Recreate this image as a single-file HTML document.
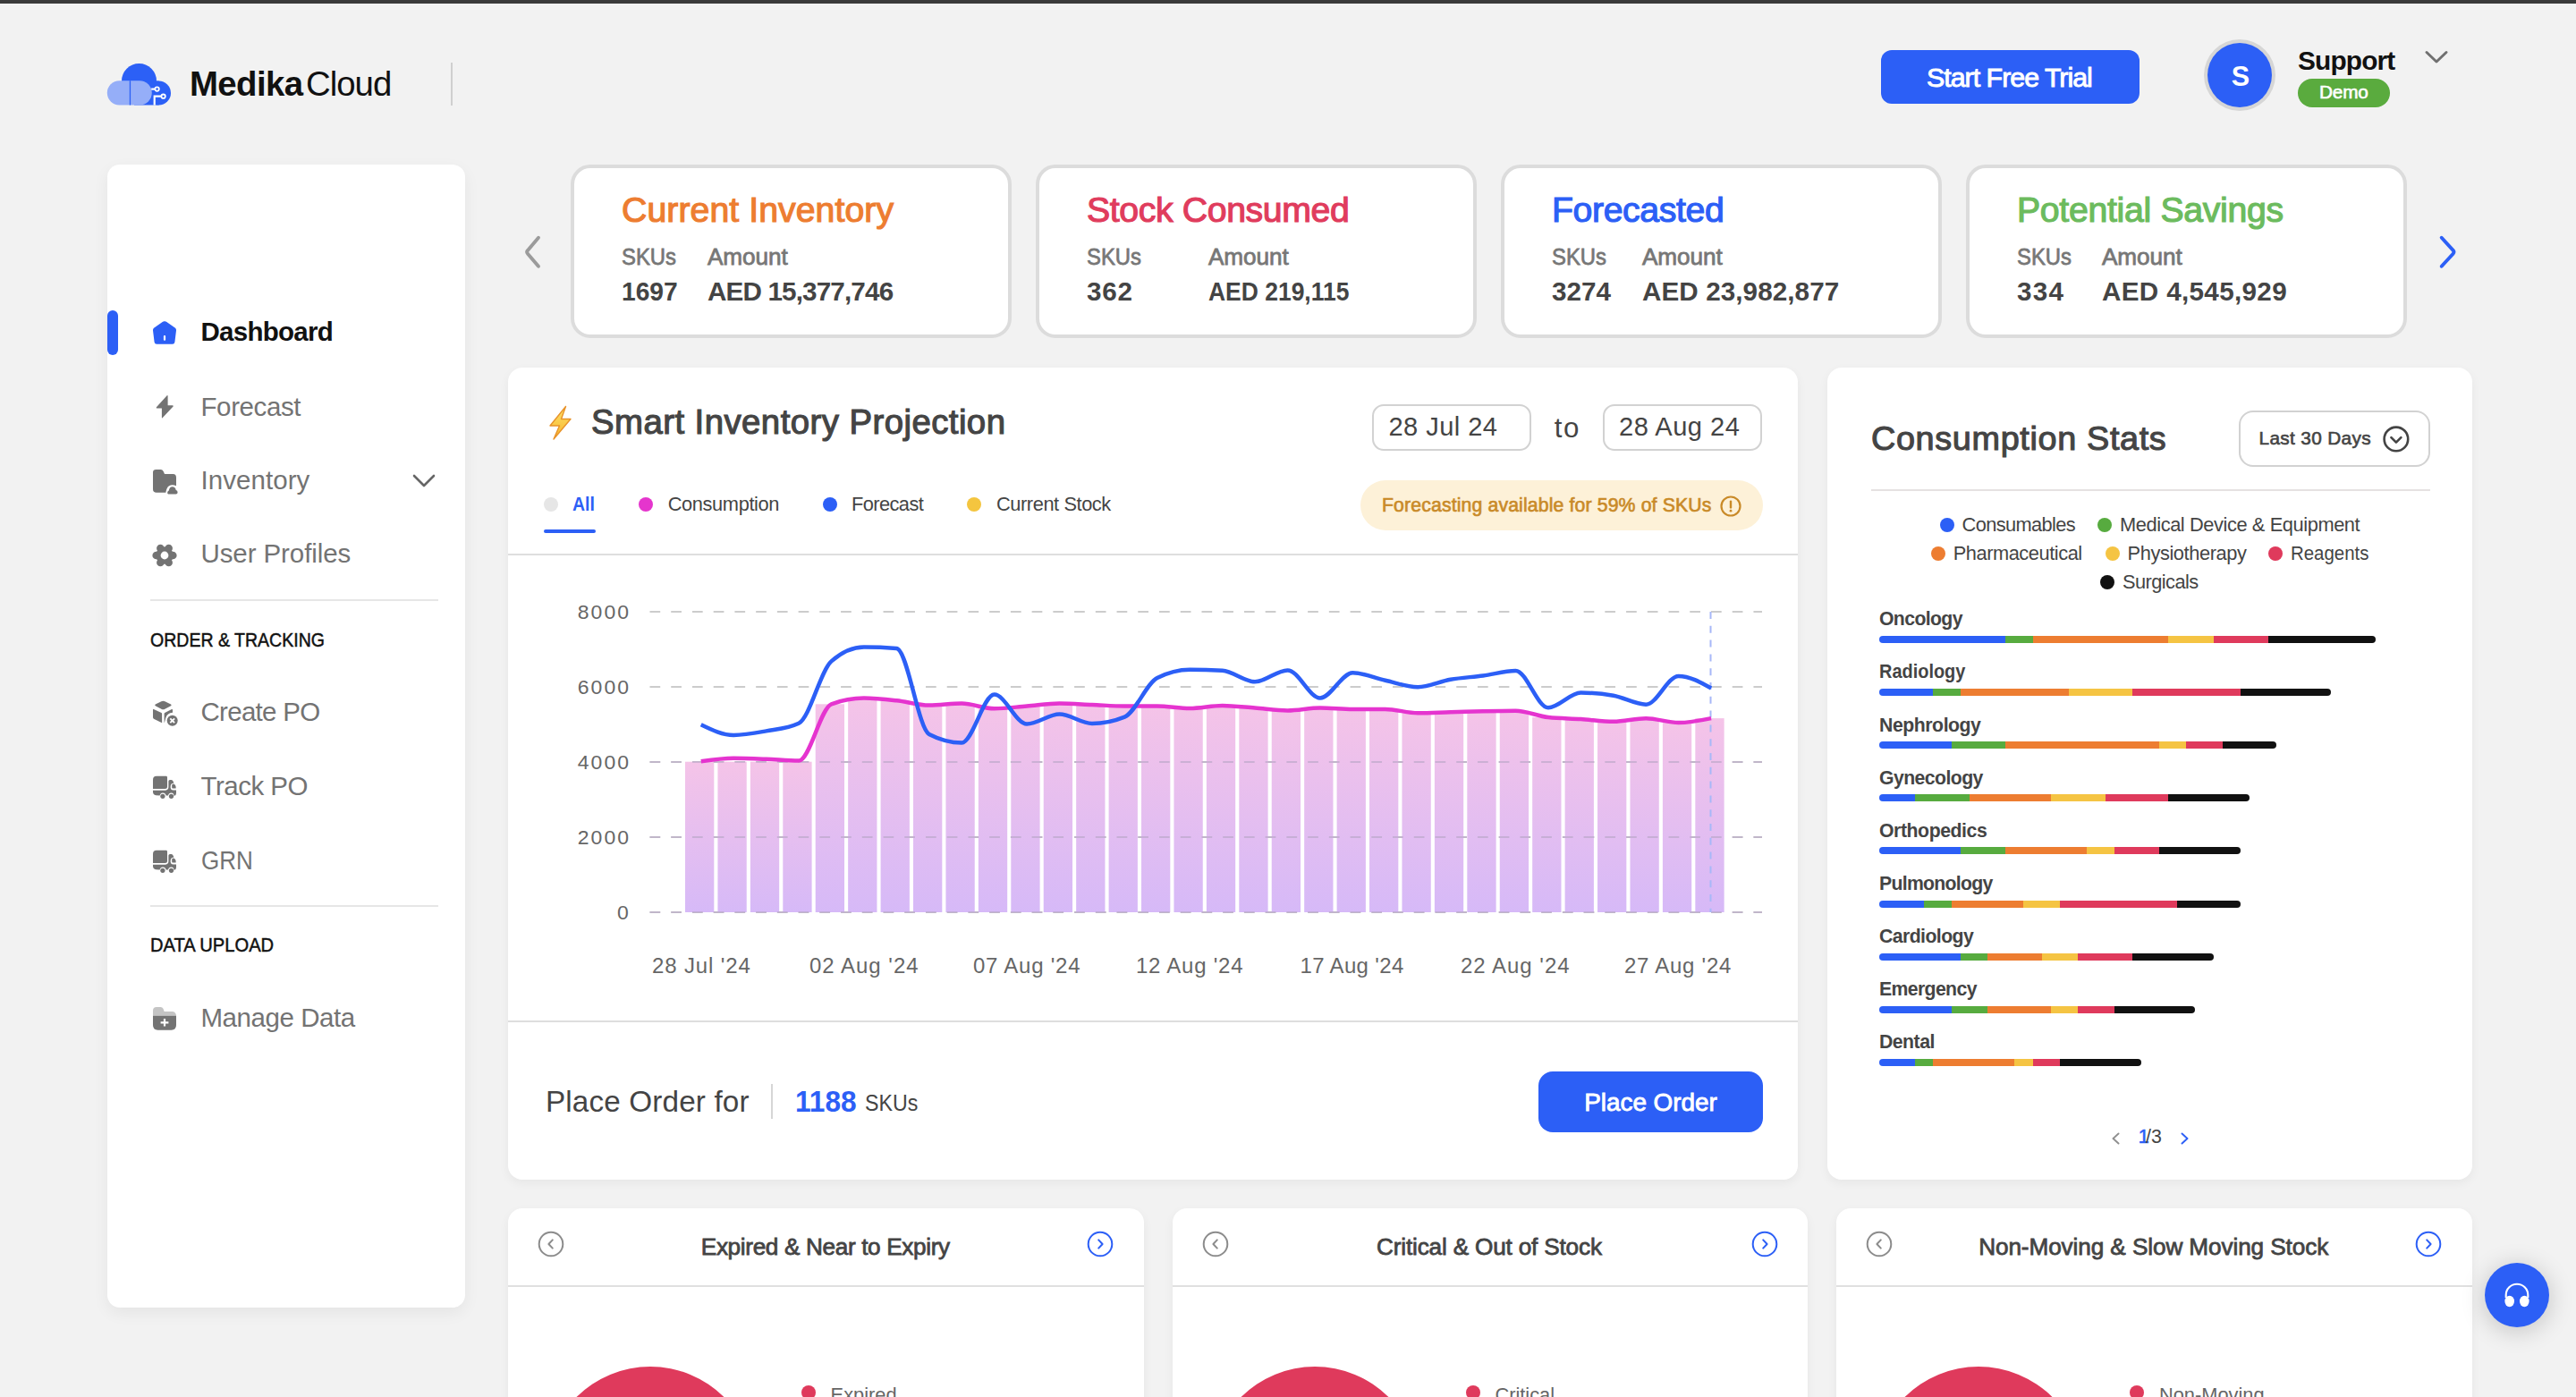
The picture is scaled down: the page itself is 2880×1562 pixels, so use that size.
<!DOCTYPE html>
<html><head><meta charset="utf-8"><title>MedikaCloud Dashboard</title>
<style>
html,body{margin:0;padding:0;}
body{width:2880px;height:1562px;overflow:hidden;position:relative;background:#f2f2f2;font-family:"Liberation Sans",sans-serif;}
.t{position:absolute;white-space:nowrap;line-height:1;}
.b{position:absolute;}
svg.b{overflow:visible;}
</style></head><body>
<div class="b" style="left:0.0px;top:0.0px;width:2880.0px;height:4.0px;background:#3b3b3b;"></div>
<svg class="b" style="left:110.0px;top:60.0px" width="90" height="65" viewBox="0 0 90 65">
<circle cx="45.5" cy="30.5" r="19.5" fill="#2c60f6"/>
<circle cx="67.5" cy="44" r="13.5" fill="#2c60f6"/>
<rect x="40" y="30.5" width="27.5" height="27" fill="#2c60f6"/>
<rect x="9.8" y="30.2" width="50" height="27.3" rx="13.65" fill="#95aef8"/>
<rect x="34.8" y="30.2" width="1.3" height="27.3" fill="#2c60f6"/>
<path d="M59.2 39.6 H63.2" stroke="#fff" stroke-width="2.2"/>
<circle cx="65.6" cy="39.6" r="2.2" fill="#2c60f6" stroke="#fff" stroke-width="1.8"/>
<path d="M62.7 57.5 V47.7 H70.1" stroke="#fff" stroke-width="2.2" fill="none"/>
<circle cx="72.6" cy="47.7" r="2.2" fill="#2c60f6" stroke="#fff" stroke-width="1.8"/>
</svg>
<div class="t" style="left:212.0px;top:74.9px;font-size:38.37px;color:#111;font-weight:700;letter-spacing:-0.60px;">Medika</div>
<div class="t" style="left:342.0px;top:74.9px;font-size:38.37px;color:#111;letter-spacing:-1.00px;">Cloud</div>
<div class="b" style="left:504.0px;top:70.0px;width:2.0px;height:48.0px;background:#cfcfcf;"></div>
<div class="b" style="left:2103.0px;top:56.0px;width:289.0px;height:60.0px;background:#2c5ff6;border-radius:12px;"></div>
<div class="t" style="left:2154.0px;top:70.9px;font-size:30.38px;color:#fff;-webkit-text-stroke:0.91px #fff;letter-spacing:-1.00px;">Start Free Trial</div>
<div class="b" style="left:2468.0px;top:48.4px;width:72.0px;height:72.0px;background:#2c5ff6;border-radius:50%;box-shadow:0 0 0 4px #d6d6d6;"></div>
<div class="t" style="left:2494.7px;top:69.8px;font-size:30.52px;color:#fff;font-weight:700;">S</div>
<div class="t" style="left:2569.0px;top:53.3px;font-size:29.80px;color:#111;font-weight:700;letter-spacing:-0.83px;">Support</div>
<div class="b" style="left:2569.0px;top:88.0px;width:103.0px;height:32.0px;background:#5aab3e;border-radius:16px;"></div>
<div class="t" style="left:2593.0px;top:93.3px;font-size:20.78px;color:#fff;-webkit-text-stroke:0.62px #fff;letter-spacing:-0.20px;">Demo</div>
<svg class="b" style="left:2710.0px;top:54.0px" width="28" height="20" viewBox="0 0 28 20"><path d="M3 4.5 L14 15 L25 4.5" stroke="#707070" stroke-width="3" fill="none" stroke-linecap="round" stroke-linejoin="round"/></svg>
<div class="b" style="left:120.0px;top:184.0px;width:400.0px;height:1278.0px;background:#fff;border-radius:14px;box-shadow:0 6px 18px rgba(0,0,0,0.06);"></div>
<div class="b" style="left:120.0px;top:347.0px;width:12.0px;height:50.0px;background:#2c5ff6;border-radius:6px;"></div>
<svg class="b" style="left:168.0px;top:356.0px" width="32" height="32" viewBox="0 0 32 32"><path d="M16 3.2 Q17 3 18 3.7 L28 10.8 Q29.2 11.8 29 13.4 L27.4 26.5 Q27 28.8 24.8 28.8 L7.2 28.8 Q5 28.8 4.6 26.5 L3 13.4 Q2.8 11.8 4 10.8 L14 3.7 Q15 3 16 3.2 Z" fill="#2c5ff6"/><rect x="14.9" y="19" width="2.2" height="5.8" rx="1" fill="#fff"/></svg>
<div class="t" style="left:224.5px;top:356.2px;font-size:29.51px;color:#111;font-weight:700;letter-spacing:-0.74px;">Dashboard</div>
<svg class="b" style="left:168.0px;top:438.0px" width="32" height="32" viewBox="0 0 32 32"><path d="M18.7 4.2 Q19.6 3.6 19.6 5 L19.6 15.3 L25 15.3 Q26.2 15.4 25.6 16.6 L13.6 29.2 Q12.9 29.9 12.9 28.6 L12.9 18.5 L7.5 18.5 Q6.1 18.4 6.9 17.2 Z" fill="#737373"/></svg>
<div class="t" style="left:224.5px;top:439.5px;font-size:29.51px;color:#737373;letter-spacing:-0.40px;">Forecast</div>
<svg class="b" style="left:168.0px;top:520.0px" width="32" height="36" viewBox="0 0 32 36"><path d="M3 8 Q3 4.9 6.5 4.9 L11.8 4.9 Q13.6 4.9 14.8 7.2 L16 9.9 L25.5 9.9 Q29 9.9 29 14 L29 23.3 Q27 22.3 24.8 22.3 Q20.4 22.3 18.5 26.5 Q17.7 28.5 17.4 30.8 L7 30.8 Q3 30.8 3 27 Z" fill="#737373"/>
<path d="M20.2 32.6 Q19 32.6 19.2 30.6 Q19.4 29 20.8 28.6 Q21.4 24.3 24.8 24.3 Q28 24.3 28.7 28 Q30.6 28.4 30.6 30.5 Q30.6 32.6 28.6 32.6 Z" fill="#737373"/></svg>
<div class="t" style="left:224.5px;top:521.9px;font-size:29.51px;color:#737373;letter-spacing:0.06px;">Inventory</div>
<svg class="b" style="left:460.0px;top:528.0px" width="28" height="20" viewBox="0 0 28 20"><path d="M3 4 L14 15 L25 4" stroke="#666" stroke-width="2.6" fill="none" stroke-linecap="round" stroke-linejoin="round"/></svg>
<svg class="b" style="left:168.0px;top:605.0px" width="32" height="32" viewBox="0 0 32 32"><circle cx="25.30" cy="16.00" r="4.3" fill="#737373"/><circle cx="20.65" cy="24.05" r="4.3" fill="#737373"/><circle cx="11.35" cy="24.05" r="4.3" fill="#737373"/><circle cx="6.70" cy="16.00" r="4.3" fill="#737373"/><circle cx="11.35" cy="7.95" r="4.3" fill="#737373"/><circle cx="20.65" cy="7.95" r="4.3" fill="#737373"/><circle cx="16" cy="16" r="9.8" fill="#737373"/><circle cx="16" cy="16" r="4.4" fill="#fff"/></svg>
<div class="t" style="left:224.5px;top:603.9px;font-size:29.51px;color:#737373;letter-spacing:-0.09px;">User Profiles</div>
<div class="b" style="left:168.0px;top:670.0px;width:322.0px;height:2.0px;background:#e6e6e6;"></div>
<div class="t" style="left:168.0px;top:704.5px;font-size:21.80px;color:#111;transform:scaleX(0.8959);transform-origin:0 0;-webkit-text-stroke:0.48px #111;">ORDER &amp; TRACKING</div>
<svg class="b" style="left:168.0px;top:780.0px" width="32" height="34" viewBox="0 0 32 34"><path d="M12.4 14.2 Q14.4 13.2 16.4 14.2 L23 17.6 Q24.4 18.4 23 19.2 L16.4 22.7 Q14.4 23.7 12.4 22.7 L5.8 19.2 Q4.4 18.4 5.8 17.6 Z" fill="#737373" transform="translate(0,-10)"/>
<path d="M3 13.4 L3 22 Q3 23.3 4.4 24 L13.1 28.2 L13.1 18 Q13.1 17.4 12.5 17.1 L3.8 12.9 Q3 12.6 3 13.4 Z" fill="#737373"/>
<path d="M15.6 28.5 L15.6 18 Q15.6 17.4 16.2 17.1 L24 13.1 Q25 12.8 25 13.8 L25 16.8 Q19 17 17.2 23 Q16.6 26 15.6 28.5 Z" fill="#737373"/>
<circle cx="24.7" cy="25.8" r="6" fill="#737373"/>
<path d="M22.3 23.4 L27.1 28.2 M27.1 23.4 L22.3 28.2" stroke="#fff" stroke-width="1.9"/></svg>
<div class="t" style="left:224.5px;top:780.9px;font-size:29.51px;color:#737373;letter-spacing:-0.71px;">Create PO</div>
<svg class="b" style="left:168.0px;top:863.0px" width="32" height="32" viewBox="0 0 32 32"><path d="M3 9 Q3 4.8 7 4.8 L17.6 4.8 Q19 4.8 19 6.2 L19 16.6 Q19 19.1 16.5 19.1 L3 19.1 Z" fill="#737373"/>
<path d="M20.4 10.6 Q20.4 9 22 9 L23.5 9 Q25 9 25.8 10.9 L26.4 12.4 Q24 12.4 23.2 14 Q22.6 15.3 22.6 17.3 Q22.8 20.4 25.6 20.6 L29 20.6 L29 24 Q29 26.6 26.6 27 Q26.6 23.8 23.5 23.4 Q20.6 23.4 20 26.6 L17.6 26.6 Q17 23.4 14 23.4 Q11 23.8 10.6 26.6 L6.4 26.3 Q3 25.6 3 22.6 L3 20.7 L17 20.7 Q20.4 20.4 20.4 17 Z" fill="#737373"/>
<path d="M24.2 17.6 L24.2 15 Q24.2 13.3 25.8 13.4 Q27.4 13.6 28 15 L28.6 16.6 L28.6 18.6 L25 18.6 Q24.2 18.6 24.2 17.6 Z" fill="#737373"/>
<circle cx="13.9" cy="27.3" r="2.6" fill="#737373"/><circle cx="23.5" cy="27.3" r="2.6" fill="#737373"/></svg>
<div class="t" style="left:224.5px;top:863.9px;font-size:29.51px;color:#737373;letter-spacing:-0.50px;">Track PO</div>
<svg class="b" style="left:168.0px;top:946.0px" width="32" height="32" viewBox="0 0 32 32"><path d="M3 9 Q3 4.8 7 4.8 L17.6 4.8 Q19 4.8 19 6.2 L19 16.6 Q19 19.1 16.5 19.1 L3 19.1 Z" fill="#737373"/>
<path d="M20.4 10.6 Q20.4 9 22 9 L23.5 9 Q25 9 25.8 10.9 L26.4 12.4 Q24 12.4 23.2 14 Q22.6 15.3 22.6 17.3 Q22.8 20.4 25.6 20.6 L29 20.6 L29 24 Q29 26.6 26.6 27 Q26.6 23.8 23.5 23.4 Q20.6 23.4 20 26.6 L17.6 26.6 Q17 23.4 14 23.4 Q11 23.8 10.6 26.6 L6.4 26.3 Q3 25.6 3 22.6 L3 20.7 L17 20.7 Q20.4 20.4 20.4 17 Z" fill="#737373"/>
<path d="M24.2 17.6 L24.2 15 Q24.2 13.3 25.8 13.4 Q27.4 13.6 28 15 L28.6 16.6 L28.6 18.6 L25 18.6 Q24.2 18.6 24.2 17.6 Z" fill="#737373"/>
<circle cx="13.9" cy="27.3" r="2.6" fill="#737373"/><circle cx="23.5" cy="27.3" r="2.6" fill="#737373"/></svg>
<div class="t" style="left:224.5px;top:946.9px;font-size:29.51px;color:#737373;transform:scaleX(0.8818);transform-origin:0 0;">GRN</div>
<div class="b" style="left:168.0px;top:1012.0px;width:322.0px;height:2.0px;background:#e6e6e6;"></div>
<div class="t" style="left:168.0px;top:1045.5px;font-size:21.80px;color:#111;transform:scaleX(0.9248);transform-origin:0 0;-webkit-text-stroke:0.48px #111;">DATA UPLOAD</div>
<svg class="b" style="left:168.0px;top:1120.0px" width="32" height="36" viewBox="0 0 32 36"><path d="M3 10 Q3 6 7 6 L11.5 6 Q13.6 6 14.6 8 L15.6 10.9 L24.6 10.9 Q28 10.9 29 15 L3 15 Z" fill="#c4c4c4"/>
<path d="M3 15.4 L29 15.4 L29 26 Q29 31.7 23.6 31.7 L8.4 31.7 Q3 31.7 3 26 Z" fill="#737373"/>
<path d="M16 19 V27.6 M11.6 23.3 H20.4" stroke="#fff" stroke-width="2.2"/></svg>
<div class="t" style="left:224.5px;top:1122.5px;font-size:29.51px;color:#737373;letter-spacing:-0.45px;">Manage Data</div>
<svg class="b" style="left:580.0px;top:258.0px" width="30" height="46" viewBox="0 0 30 46"><path d="M22 7.8 L10 21.9 Q8.3 23.8 10 25.7 L22 39.8" stroke="#9b9b9b" stroke-width="3.9" fill="none" stroke-linecap="round" stroke-linejoin="round"/></svg>
<svg class="b" style="left:2720.0px;top:258.0px" width="30" height="46" viewBox="0 0 30 46"><path d="M9.7 7.8 L22.6 21.9 Q24.3 23.8 22.6 25.7 L9.7 39.8" stroke="#2c5ff6" stroke-width="3.9" fill="none" stroke-linecap="round" stroke-linejoin="round"/></svg>
<div class="b" style="left:638.0px;top:184.0px;width:493.0px;height:194.0px;background:#fff;border:4px solid #dcdcdc;border-radius:22px;box-sizing:border-box;"></div>
<div class="t" style="left:695.0px;top:214.6px;font-size:39.24px;color:#ed7d31;-webkit-text-stroke:1.18px #ed7d31;letter-spacing:0.06px;">Current Inventory</div>
<div class="t" style="left:695.0px;top:273.8px;font-size:26.16px;color:#777;transform:scaleX(0.9104);transform-origin:0 0;-webkit-text-stroke:0.78px #777;">SKUs</div>
<div class="t" style="left:791.0px;top:273.8px;font-size:26.16px;color:#777;-webkit-text-stroke:0.78px #777;letter-spacing:-0.10px;">Amount</div>
<div class="t" style="left:695.0px;top:310.8px;font-size:29.65px;color:#444;transform:scaleX(0.9515);transform-origin:0 0;font-weight:700;">1697</div>
<div class="t" style="left:791.0px;top:310.8px;font-size:29.65px;color:#444;font-weight:700;letter-spacing:-0.85px;">AED 15,377,746</div>
<div class="b" style="left:1158.0px;top:184.0px;width:493.0px;height:194.0px;background:#fff;border:4px solid #dcdcdc;border-radius:22px;box-sizing:border-box;"></div>
<div class="t" style="left:1215.0px;top:214.6px;font-size:39.24px;color:#e03c5d;-webkit-text-stroke:1.18px #e03c5d;letter-spacing:-0.38px;">Stock Consumed</div>
<div class="t" style="left:1215.0px;top:273.8px;font-size:26.16px;color:#777;transform:scaleX(0.9104);transform-origin:0 0;-webkit-text-stroke:0.78px #777;">SKUs</div>
<div class="t" style="left:1351.0px;top:273.8px;font-size:26.16px;color:#777;-webkit-text-stroke:0.78px #777;letter-spacing:-0.10px;">Amount</div>
<div class="t" style="left:1215.0px;top:310.8px;font-size:29.65px;color:#444;font-weight:700;letter-spacing:0.75px;">362</div>
<div class="t" style="left:1351.0px;top:310.8px;font-size:29.65px;color:#444;transform:scaleX(0.8927);transform-origin:0 0;font-weight:700;">AED 219,115</div>
<div class="b" style="left:1678.0px;top:184.0px;width:493.0px;height:194.0px;background:#fff;border:4px solid #dcdcdc;border-radius:22px;box-sizing:border-box;"></div>
<div class="t" style="left:1735.0px;top:214.6px;font-size:39.24px;color:#2c5ff6;-webkit-text-stroke:1.18px #2c5ff6;letter-spacing:-0.39px;">Forecasted</div>
<div class="t" style="left:1735.0px;top:273.8px;font-size:26.16px;color:#777;transform:scaleX(0.9104);transform-origin:0 0;-webkit-text-stroke:0.78px #777;">SKUs</div>
<div class="t" style="left:1836.0px;top:273.8px;font-size:26.16px;color:#777;-webkit-text-stroke:0.78px #777;letter-spacing:-0.10px;">Amount</div>
<div class="t" style="left:1735.0px;top:310.8px;font-size:29.65px;color:#444;font-weight:700;">3274</div>
<div class="t" style="left:1836.0px;top:310.8px;font-size:29.65px;color:#444;font-weight:700;letter-spacing:0.08px;">AED 23,982,877</div>
<div class="b" style="left:2198.0px;top:184.0px;width:493.0px;height:194.0px;background:#fff;border:4px solid #dcdcdc;border-radius:22px;box-sizing:border-box;"></div>
<div class="t" style="left:2255.0px;top:214.6px;font-size:39.24px;color:#6cbb5e;-webkit-text-stroke:1.18px #6cbb5e;letter-spacing:-0.32px;">Potential Savings</div>
<div class="t" style="left:2255.0px;top:273.8px;font-size:26.16px;color:#777;transform:scaleX(0.9104);transform-origin:0 0;-webkit-text-stroke:0.78px #777;">SKUs</div>
<div class="t" style="left:2350.0px;top:273.8px;font-size:26.16px;color:#777;-webkit-text-stroke:0.78px #777;letter-spacing:-0.10px;">Amount</div>
<div class="t" style="left:2255.0px;top:310.8px;font-size:29.65px;color:#444;font-weight:700;letter-spacing:1.25px;">334</div>
<div class="t" style="left:2350.0px;top:310.8px;font-size:29.65px;color:#444;font-weight:700;letter-spacing:0.33px;">AED 4,545,929</div>
<div class="b" style="left:568.0px;top:411.0px;width:1442.0px;height:908.0px;background:#fff;border-radius:16px;box-shadow:0 4px 12px rgba(0,0,0,0.05);"></div>
<svg class="b" style="left:608.0px;top:450.0px" width="36" height="46" viewBox="0 0 36 46"><defs><linearGradient id="lg" x1="0" y1="0" x2="0" y2="1"><stop offset="0" stop-color="#fde26a"/><stop offset="1" stop-color="#f7b52c"/></linearGradient></defs>
<path d="M24.5 4.5 L7 26 L17.5 26 L11 41 L30 18.5 L19.5 18.5 Z" fill="url(#lg)" stroke="#e8932a" stroke-width="1.4" stroke-linejoin="round"/></svg>
<div class="t" style="left:661.0px;top:453.4px;font-size:38.37px;color:#444;-webkit-text-stroke:1.15px #444;letter-spacing:0.44px;">Smart Inventory Projection</div>
<div class="b" style="left:1534.0px;top:452.0px;width:178.0px;height:52.0px;background:#fff;border:2px solid #d2d2d2;border-radius:13px;box-sizing:border-box;"></div>
<div class="t" style="left:1552.5px;top:463.3px;font-size:29.07px;color:#444;letter-spacing:0.44px;">28 Jul 24</div>
<div class="t" style="left:1737.8px;top:463.0px;font-size:31.25px;color:#444;letter-spacing:1.60px;">to</div>
<div class="b" style="left:1792.0px;top:452.0px;width:178.0px;height:52.0px;background:#fff;border:2px solid #d2d2d2;border-radius:13px;box-sizing:border-box;"></div>
<div class="t" style="left:1810.0px;top:463.3px;font-size:29.07px;color:#444;letter-spacing:0.50px;">28 Aug 24</div>
<div class="b" style="left:1521.0px;top:537.0px;width:450.0px;height:56.0px;background:#fdf1d8;border-radius:28px;"></div>
<div class="t" style="left:1545.0px;top:553.8px;font-size:21.22px;color:#c98a28;-webkit-text-stroke:0.64px #c98a28;letter-spacing:0.14px;">Forecasting available for 59% of SKUs</div>
<svg class="b" style="left:1922.0px;top:553.0px" width="26" height="26" viewBox="0 0 26 26"><circle cx="13" cy="13" r="10.5" stroke="#c98a28" stroke-width="2.2" fill="none"/><path d="M13 7.6 V14.4" stroke="#c98a28" stroke-width="2.4" stroke-linecap="round"/><circle cx="13" cy="18.2" r="1.4" fill="#c98a28"/></svg>
<div class="b" style="left:608.0px;top:556.0px;width:16.0px;height:16.0px;background:#e6e6e6;border-radius:50%;"></div>
<div class="t" style="left:640.4px;top:553.0px;font-size:21.80px;color:#2c5ff6;transform:scaleX(0.8929);transform-origin:0 0;font-weight:700;">All</div>
<div class="b" style="left:608.0px;top:592.0px;width:58.0px;height:4.0px;background:#2c5ff6;border-radius:2px;"></div>
<div class="b" style="left:714.0px;top:556.0px;width:16.0px;height:16.0px;background:#e535cd;border-radius:50%;"></div>
<div class="t" style="left:746.7px;top:553.0px;font-size:21.80px;color:#444;letter-spacing:-0.37px;">Consumption</div>
<div class="b" style="left:920.0px;top:556.0px;width:16.0px;height:16.0px;background:#2c5ff6;border-radius:50%;"></div>
<div class="t" style="left:952.0px;top:553.0px;font-size:21.80px;color:#444;letter-spacing:-0.57px;">Forecast</div>
<div class="b" style="left:1081.0px;top:556.0px;width:16.0px;height:16.0px;background:#f4c53f;border-radius:50%;"></div>
<div class="t" style="left:1114.0px;top:553.0px;font-size:21.80px;color:#444;letter-spacing:-0.42px;">Current Stock</div>
<div class="b" style="left:568.0px;top:619.0px;width:1442.0px;height:2.0px;background:#dedede;"></div>
<div class="b" style="left:568.0px;top:1141.0px;width:1442.0px;height:2.0px;background:#dedede;"></div>
<svg class="b" style="left:560.0px;top:640.0px" width="1440" height="400" viewBox="0 0 1440 400"><defs><linearGradient id="bg" x1="0" y1="0" x2="0" y2="1">
<stop offset="0" stop-color="#f4bfe6"/><stop offset="1" stop-color="#d3b4f7"/></linearGradient></defs><line x1="166.5" y1="44.0" x2="1410" y2="44.0" stroke="#cccccc" stroke-width="2" stroke-dasharray="11.7 12.03"/><line x1="166.5" y1="128.0" x2="1410" y2="128.0" stroke="#cccccc" stroke-width="2" stroke-dasharray="11.7 12.03"/><line x1="166.5" y1="212.0" x2="1410" y2="212.0" stroke="#cccccc" stroke-width="2" stroke-dasharray="11.7 12.03"/><line x1="166.5" y1="296.0" x2="1410" y2="296.0" stroke="#cccccc" stroke-width="2" stroke-dasharray="11.7 12.03"/><line x1="166.5" y1="380.0" x2="1410" y2="380.0" stroke="#cccccc" stroke-width="2" stroke-dasharray="11.7 12.03"/><rect x="206.00" y="211.70" width="32.30" height="168.30" fill="url(#bg)" fill-opacity="0.93"/><rect x="242.43" y="211.70" width="32.30" height="168.30" fill="url(#bg)" fill-opacity="0.93"/><rect x="278.86" y="211.70" width="32.30" height="168.30" fill="url(#bg)" fill-opacity="0.93"/><rect x="315.29" y="211.70" width="32.30" height="168.30" fill="url(#bg)" fill-opacity="0.93"/><rect x="351.72" y="147.30" width="32.30" height="232.70" fill="url(#bg)" fill-opacity="0.93"/><rect x="388.15" y="140.60" width="32.30" height="239.40" fill="url(#bg)" fill-opacity="0.93"/><rect x="424.58" y="143.30" width="32.30" height="236.70" fill="url(#bg)" fill-opacity="0.93"/><rect x="461.01" y="148.60" width="32.30" height="231.40" fill="url(#bg)" fill-opacity="0.93"/><rect x="497.44" y="146.60" width="32.30" height="233.40" fill="url(#bg)" fill-opacity="0.93"/><rect x="533.87" y="152.30" width="32.30" height="227.70" fill="url(#bg)" fill-opacity="0.93"/><rect x="570.30" y="149.50" width="32.30" height="230.50" fill="url(#bg)" fill-opacity="0.93"/><rect x="606.73" y="146.60" width="32.30" height="233.40" fill="url(#bg)" fill-opacity="0.93"/><rect x="643.16" y="148.00" width="32.30" height="232.00" fill="url(#bg)" fill-opacity="0.93"/><rect x="679.59" y="149.50" width="32.30" height="230.50" fill="url(#bg)" fill-opacity="0.93"/><rect x="716.02" y="149.50" width="32.30" height="230.50" fill="url(#bg)" fill-opacity="0.93"/><rect x="752.45" y="152.00" width="32.30" height="228.00" fill="url(#bg)" fill-opacity="0.93"/><rect x="788.88" y="149.00" width="32.30" height="231.00" fill="url(#bg)" fill-opacity="0.93"/><rect x="825.31" y="151.60" width="32.30" height="228.40" fill="url(#bg)" fill-opacity="0.93"/><rect x="861.74" y="154.50" width="32.30" height="225.50" fill="url(#bg)" fill-opacity="0.93"/><rect x="898.17" y="151.60" width="32.30" height="228.40" fill="url(#bg)" fill-opacity="0.93"/><rect x="934.60" y="153.00" width="32.30" height="227.00" fill="url(#bg)" fill-opacity="0.93"/><rect x="971.03" y="153.00" width="32.30" height="227.00" fill="url(#bg)" fill-opacity="0.93"/><rect x="1007.46" y="157.30" width="32.30" height="222.70" fill="url(#bg)" fill-opacity="0.93"/><rect x="1043.89" y="156.20" width="32.30" height="223.80" fill="url(#bg)" fill-opacity="0.93"/><rect x="1080.32" y="155.20" width="32.30" height="224.80" fill="url(#bg)" fill-opacity="0.93"/><rect x="1116.75" y="154.70" width="32.30" height="225.30" fill="url(#bg)" fill-opacity="0.93"/><rect x="1153.18" y="162.10" width="32.30" height="217.90" fill="url(#bg)" fill-opacity="0.93"/><rect x="1189.61" y="164.10" width="32.30" height="215.90" fill="url(#bg)" fill-opacity="0.93"/><rect x="1226.04" y="166.80" width="32.30" height="213.20" fill="url(#bg)" fill-opacity="0.93"/><rect x="1262.47" y="163.20" width="32.30" height="216.80" fill="url(#bg)" fill-opacity="0.93"/><rect x="1298.90" y="168.10" width="32.30" height="211.90" fill="url(#bg)" fill-opacity="0.93"/><rect x="1335.33" y="163.10" width="32.30" height="216.90" fill="url(#bg)" fill-opacity="0.93"/><line x1="166.5" y1="212.0" x2="1410" y2="212.0" stroke="#b8a6c6" stroke-opacity="0.6" stroke-width="2" stroke-dasharray="11.7 12.03"/><line x1="166.5" y1="296.0" x2="1410" y2="296.0" stroke="#b8a6c6" stroke-opacity="0.6" stroke-width="2" stroke-dasharray="11.7 12.03"/><line x1="166.5" y1="380.0" x2="1410" y2="380.0" stroke="#b8a6c6" stroke-opacity="0.6" stroke-width="2" stroke-dasharray="11.7 12.03"/><line x1="1352.5" y1="44.0" x2="1352.5" y2="380.0" stroke="#a7b8f8" stroke-width="2" stroke-dasharray="8 7.8"/><path d="M783.75 851.30 C795.89 849.55 808.04 847.80 820.18 847.80 C832.32 847.80 844.47 848.33 856.61 848.80 C868.75 849.27 880.90 850.60 893.04 850.60 C905.18 850.60 917.33 791.77 929.47 787.30 C941.61 782.83 953.76 780.60 965.90 780.60 C978.04 780.60 990.19 781.97 1002.33 783.30 C1014.47 784.63 1026.62 788.60 1038.76 788.60 C1050.90 788.60 1063.05 786.60 1075.19 786.60 C1087.33 786.60 1099.48 792.30 1111.62 792.30 C1123.76 792.30 1135.91 790.45 1148.05 789.50 C1160.19 788.55 1172.34 786.60 1184.48 786.60 C1196.62 786.60 1208.77 787.52 1220.91 788.00 C1233.05 788.48 1245.20 789.50 1257.34 789.50 C1269.48 789.50 1281.63 789.50 1293.77 789.50 C1305.91 789.50 1318.06 792.00 1330.20 792.00 C1342.34 792.00 1354.49 789.00 1366.63 789.00 C1378.77 789.00 1390.92 790.68 1403.06 791.60 C1415.20 792.52 1427.35 794.50 1439.49 794.50 C1451.63 794.50 1463.78 791.60 1475.92 791.60 C1488.06 791.60 1500.21 793.00 1512.35 793.00 C1524.49 793.00 1536.64 793.00 1548.78 793.00 C1560.92 793.00 1573.07 797.30 1585.21 797.30 C1597.35 797.30 1609.50 796.55 1621.64 796.20 C1633.78 795.85 1645.93 795.45 1658.07 795.20 C1670.21 794.95 1682.36 794.70 1694.50 794.70 C1706.64 794.70 1718.79 800.77 1730.93 802.10 C1743.07 803.43 1755.22 803.32 1767.36 804.10 C1779.50 804.88 1791.65 806.80 1803.79 806.80 C1815.93 806.80 1828.08 803.20 1840.22 803.20 C1852.36 803.20 1864.51 808.10 1876.65 808.10 C1888.79 808.10 1900.94 805.60 1913.08 803.10" transform="translate(-560,-640)" fill="none" stroke="#e534cf" stroke-width="4.5"/><path d="M783.75 810.20 C795.89 816.10 808.04 822.00 820.18 822.00 C832.32 822.00 844.47 819.60 856.61 817.40 C868.75 815.20 880.90 814.53 893.04 808.80 C905.18 803.07 917.33 749.93 929.47 739.40 C941.61 728.87 953.76 723.60 965.90 723.60 C978.04 723.60 990.19 724.07 1002.33 725.00 C1014.47 725.93 1026.62 814.67 1038.76 821.00 C1050.90 827.33 1063.05 830.50 1075.19 830.50 C1087.33 830.50 1099.48 776.60 1111.62 776.60 C1123.76 776.60 1135.91 809.50 1148.05 809.50 C1160.19 809.50 1172.34 798.50 1184.48 798.50 C1196.62 798.50 1208.77 809.00 1220.91 809.00 C1233.05 809.00 1245.20 806.53 1257.34 801.60 C1269.48 796.67 1281.63 764.20 1293.77 758.00 C1305.91 751.80 1318.06 748.70 1330.20 748.70 C1342.34 748.70 1354.49 749.07 1366.63 749.80 C1378.77 750.53 1390.92 762.30 1403.06 762.30 C1415.20 762.30 1427.35 749.40 1439.49 749.40 C1451.63 749.40 1463.78 780.40 1475.92 780.40 C1488.06 780.40 1500.21 752.20 1512.35 752.20 C1524.49 752.20 1536.64 758.13 1548.78 760.80 C1560.92 763.47 1573.07 768.20 1585.21 768.20 C1597.35 768.20 1609.50 761.92 1621.64 759.80 C1633.78 757.68 1645.93 757.13 1658.07 755.50 C1670.21 753.87 1682.36 750.00 1694.50 750.00 C1706.64 750.00 1718.79 791.30 1730.93 791.30 C1743.07 791.30 1755.22 774.60 1767.36 774.60 C1779.50 774.60 1791.65 775.63 1803.79 777.70 C1815.93 779.77 1828.08 787.70 1840.22 787.70 C1852.36 787.70 1864.51 755.90 1876.65 755.90 C1888.79 755.90 1900.94 762.70 1913.08 769.50" transform="translate(-560,-640)" fill="none" stroke="#2c5ff6" stroke-width="4.5"/></svg>
<div class="t" style="left:645.7px;top:673.2px;font-size:22.97px;color:#666;letter-spacing:2.10px;">8000</div>
<div class="t" style="left:645.7px;top:757.2px;font-size:22.97px;color:#666;letter-spacing:2.10px;">6000</div>
<div class="t" style="left:645.7px;top:841.2px;font-size:22.97px;color:#666;letter-spacing:2.10px;">4000</div>
<div class="t" style="left:645.7px;top:925.2px;font-size:22.97px;color:#666;letter-spacing:2.10px;">2000</div>
<div class="t" style="left:690.0px;top:1009.2px;font-size:22.97px;color:#666;">0</div>
<div class="t" style="left:729.0px;top:1068.3px;font-size:23.98px;color:#666;letter-spacing:0.89px;">28 Jul '24</div>
<div class="t" style="left:905.0px;top:1068.3px;font-size:23.98px;color:#666;letter-spacing:1.00px;">02 Aug '24</div>
<div class="t" style="left:1088.0px;top:1068.3px;font-size:23.98px;color:#666;letter-spacing:0.78px;">07 Aug '24</div>
<div class="t" style="left:1270.0px;top:1068.3px;font-size:23.98px;color:#666;letter-spacing:0.78px;">12 Aug '24</div>
<div class="t" style="left:1453.5px;top:1068.3px;font-size:23.98px;color:#666;letter-spacing:0.36px;">17 Aug '24</div>
<div class="t" style="left:1633.0px;top:1068.3px;font-size:23.98px;color:#666;letter-spacing:1.00px;">22 Aug '24</div>
<div class="t" style="left:1816.0px;top:1068.3px;font-size:23.98px;color:#666;letter-spacing:0.76px;">27 Aug '24</div>
<div class="t" style="left:610.0px;top:1214.7px;font-size:33.28px;color:#444;letter-spacing:0.14px;">Place Order for</div>
<div class="b" style="left:862.0px;top:1212.0px;width:2.0px;height:39.0px;background:#d6d6d6;"></div>
<div class="t" style="left:888.6px;top:1214.7px;font-size:33.28px;color:#2c5ff6;transform:scaleX(0.9500);transform-origin:0 0;font-weight:700;">1188</div>
<div class="t" style="left:966.8px;top:1221.4px;font-size:25.44px;color:#444;transform:scaleX(0.9108);transform-origin:0 0;">SKUs</div>
<div class="b" style="left:1720.0px;top:1198.0px;width:251.0px;height:68.0px;background:#2c5ff6;border-radius:16px;"></div>
<div class="t" style="left:1771.3px;top:1218.6px;font-size:27.91px;color:#fff;-webkit-text-stroke:0.84px #fff;letter-spacing:-0.04px;">Place Order</div>
<div class="b" style="left:2043.0px;top:411.0px;width:721.0px;height:908.0px;background:#fff;border-radius:16px;box-shadow:0 4px 12px rgba(0,0,0,0.05);"></div>
<div class="t" style="left:2092.0px;top:471.9px;font-size:37.79px;color:#444;-webkit-text-stroke:1.13px #444;letter-spacing:0.66px;">Consumption Stats</div>
<div class="b" style="left:2503.4px;top:459.3px;width:213.5px;height:63.2px;border:2px solid #d2d2d2;border-radius:16px;box-sizing:border-box;background:#fff;"></div>
<div class="t" style="left:2525.6px;top:480.0px;font-size:20.78px;color:#444;-webkit-text-stroke:0.62px #444;letter-spacing:0.34px;">Last 30 Days</div>
<svg class="b" style="left:2662.0px;top:474.0px" width="34" height="34" viewBox="0 0 34 34"><circle cx="16.9" cy="16.9" r="13.3" stroke="#444" stroke-width="2.6" fill="none"/><path d="M11.4 15.2 L16.9 20.7 L22.4 15.2" stroke="#444" stroke-width="2.6" fill="none" stroke-linecap="round" stroke-linejoin="round"/></svg>
<div class="b" style="left:2092.0px;top:547.0px;width:625.0px;height:2.0px;background:#e5e1e1;"></div>
<div class="b" style="left:2169.0px;top:579.0px;width:16.0px;height:16.0px;background:#2c5ff6;border-radius:50%;"></div>
<div class="t" style="left:2193.6px;top:575.5px;font-size:21.80px;color:#444;letter-spacing:-0.61px;">Consumables</div>
<div class="b" style="left:2345.0px;top:579.0px;width:16.0px;height:16.0px;background:#57ab3f;border-radius:50%;"></div>
<div class="t" style="left:2370.0px;top:575.5px;font-size:21.80px;color:#444;letter-spacing:-0.40px;">Medical Device &amp; Equipment</div>
<div class="b" style="left:2159.0px;top:611.0px;width:16.0px;height:16.0px;background:#ed7d31;border-radius:50%;"></div>
<div class="t" style="left:2183.7px;top:607.7px;font-size:21.80px;color:#444;letter-spacing:-0.44px;">Pharmaceutical</div>
<div class="b" style="left:2354.0px;top:611.0px;width:16.0px;height:16.0px;background:#f5c443;border-radius:50%;"></div>
<div class="t" style="left:2378.5px;top:607.7px;font-size:21.80px;color:#444;letter-spacing:-0.39px;">Physiotherapy</div>
<div class="b" style="left:2536.0px;top:611.0px;width:16.0px;height:16.0px;background:#df3a5c;border-radius:50%;"></div>
<div class="t" style="left:2560.7px;top:607.7px;font-size:21.80px;color:#444;transform:scaleX(0.9366);transform-origin:0 0;">Reagents</div>
<div class="b" style="left:2348.0px;top:643.0px;width:16.0px;height:16.0px;background:#111111;border-radius:50%;"></div>
<div class="t" style="left:2373.0px;top:639.7px;font-size:21.80px;color:#444;letter-spacing:-0.56px;">Surgicals</div>
<div class="t" style="left:2101.0px;top:681.3px;font-size:21.22px;color:#444;font-weight:700;letter-spacing:-0.63px;">Oncology</div>
<div class="b" style="left:2101.0px;top:711.0px;width:555.0px;height:8px;border-radius:4px;overflow:hidden"><div style="position:absolute;left:0.0px;top:0;width:141.0px;height:8px;background:#2c5ff6"></div><div style="position:absolute;left:141.0px;top:0;width:30.5px;height:8px;background:#57ab3f"></div><div style="position:absolute;left:171.5px;top:0;width:151.8px;height:8px;background:#ed7d31"></div><div style="position:absolute;left:323.3px;top:0;width:50.7px;height:8px;background:#f5c443"></div><div style="position:absolute;left:374.0px;top:0;width:61.0px;height:8px;background:#df3a5c"></div><div style="position:absolute;left:435.0px;top:0;width:120.0px;height:8px;background:#111111"></div></div>
<div class="t" style="left:2101.0px;top:740.4px;font-size:21.22px;color:#444;transform:scaleX(0.9398);transform-origin:0 0;font-weight:700;">Radiology</div>
<div class="b" style="left:2101.0px;top:770.1px;width:505.0px;height:8px;border-radius:4px;overflow:hidden"><div style="position:absolute;left:0.0px;top:0;width:60.0px;height:8px;background:#2c5ff6"></div><div style="position:absolute;left:60.0px;top:0;width:30.7px;height:8px;background:#57ab3f"></div><div style="position:absolute;left:90.7px;top:0;width:121.3px;height:8px;background:#ed7d31"></div><div style="position:absolute;left:212.0px;top:0;width:71.0px;height:8px;background:#f5c443"></div><div style="position:absolute;left:283.0px;top:0;width:120.8px;height:8px;background:#df3a5c"></div><div style="position:absolute;left:403.8px;top:0;width:101.2px;height:8px;background:#111111"></div></div>
<div class="t" style="left:2101.0px;top:799.5px;font-size:21.22px;color:#444;font-weight:700;letter-spacing:-0.44px;">Nephrology</div>
<div class="b" style="left:2101.0px;top:829.2px;width:444.0px;height:8px;border-radius:4px;overflow:hidden"><div style="position:absolute;left:0.0px;top:0;width:80.7px;height:8px;background:#2c5ff6"></div><div style="position:absolute;left:80.7px;top:0;width:60.3px;height:8px;background:#57ab3f"></div><div style="position:absolute;left:141.0px;top:0;width:172.0px;height:8px;background:#ed7d31"></div><div style="position:absolute;left:313.0px;top:0;width:30.4px;height:8px;background:#f5c443"></div><div style="position:absolute;left:343.4px;top:0;width:40.6px;height:8px;background:#df3a5c"></div><div style="position:absolute;left:384.0px;top:0;width:60.0px;height:8px;background:#111111"></div></div>
<div class="t" style="left:2101.0px;top:858.6px;font-size:21.22px;color:#444;font-weight:700;letter-spacing:-0.56px;">Gynecology</div>
<div class="b" style="left:2101.0px;top:888.3px;width:414.0px;height:8px;border-radius:4px;overflow:hidden"><div style="position:absolute;left:0.0px;top:0;width:40.0px;height:8px;background:#2c5ff6"></div><div style="position:absolute;left:40.0px;top:0;width:61.0px;height:8px;background:#57ab3f"></div><div style="position:absolute;left:101.0px;top:0;width:90.8px;height:8px;background:#ed7d31"></div><div style="position:absolute;left:191.8px;top:0;width:60.8px;height:8px;background:#f5c443"></div><div style="position:absolute;left:252.6px;top:0;width:70.7px;height:8px;background:#df3a5c"></div><div style="position:absolute;left:323.3px;top:0;width:90.7px;height:8px;background:#111111"></div></div>
<div class="t" style="left:2101.0px;top:917.7px;font-size:21.22px;color:#444;font-weight:700;letter-spacing:-0.42px;">Orthopedics</div>
<div class="b" style="left:2101.0px;top:947.4px;width:403.8px;height:8px;border-radius:4px;overflow:hidden"><div style="position:absolute;left:0.0px;top:0;width:90.7px;height:8px;background:#2c5ff6"></div><div style="position:absolute;left:90.7px;top:0;width:50.3px;height:8px;background:#57ab3f"></div><div style="position:absolute;left:141.0px;top:0;width:91.0px;height:8px;background:#ed7d31"></div><div style="position:absolute;left:232.0px;top:0;width:30.6px;height:8px;background:#f5c443"></div><div style="position:absolute;left:262.6px;top:0;width:50.4px;height:8px;background:#df3a5c"></div><div style="position:absolute;left:313.0px;top:0;width:90.8px;height:8px;background:#111111"></div></div>
<div class="t" style="left:2101.0px;top:976.8px;font-size:21.22px;color:#444;font-weight:700;letter-spacing:-0.70px;">Pulmonology</div>
<div class="b" style="left:2101.0px;top:1006.5px;width:403.8px;height:8px;border-radius:4px;overflow:hidden"><div style="position:absolute;left:0.0px;top:0;width:50.0px;height:8px;background:#2c5ff6"></div><div style="position:absolute;left:50.0px;top:0;width:30.7px;height:8px;background:#57ab3f"></div><div style="position:absolute;left:80.7px;top:0;width:80.3px;height:8px;background:#ed7d31"></div><div style="position:absolute;left:161.0px;top:0;width:40.9px;height:8px;background:#f5c443"></div><div style="position:absolute;left:201.9px;top:0;width:131.1px;height:8px;background:#df3a5c"></div><div style="position:absolute;left:333.0px;top:0;width:70.8px;height:8px;background:#111111"></div></div>
<div class="t" style="left:2101.0px;top:1035.9px;font-size:21.22px;color:#444;font-weight:700;letter-spacing:-0.56px;">Cardiology</div>
<div class="b" style="left:2101.0px;top:1065.6px;width:373.5px;height:8px;border-radius:4px;overflow:hidden"><div style="position:absolute;left:0.0px;top:0;width:90.7px;height:8px;background:#2c5ff6"></div><div style="position:absolute;left:90.7px;top:0;width:30.3px;height:8px;background:#57ab3f"></div><div style="position:absolute;left:121.0px;top:0;width:60.5px;height:8px;background:#ed7d31"></div><div style="position:absolute;left:181.5px;top:0;width:40.5px;height:8px;background:#f5c443"></div><div style="position:absolute;left:222.0px;top:0;width:61.0px;height:8px;background:#df3a5c"></div><div style="position:absolute;left:283.0px;top:0;width:90.5px;height:8px;background:#111111"></div></div>
<div class="t" style="left:2101.0px;top:1095.0px;font-size:21.22px;color:#444;font-weight:700;letter-spacing:-0.62px;">Emergency</div>
<div class="b" style="left:2101.0px;top:1124.7px;width:353.0px;height:8px;border-radius:4px;overflow:hidden"><div style="position:absolute;left:0.0px;top:0;width:80.7px;height:8px;background:#2c5ff6"></div><div style="position:absolute;left:80.7px;top:0;width:40.3px;height:8px;background:#57ab3f"></div><div style="position:absolute;left:121.0px;top:0;width:70.8px;height:8px;background:#ed7d31"></div><div style="position:absolute;left:191.8px;top:0;width:30.2px;height:8px;background:#f5c443"></div><div style="position:absolute;left:222.0px;top:0;width:40.6px;height:8px;background:#df3a5c"></div><div style="position:absolute;left:262.6px;top:0;width:90.4px;height:8px;background:#111111"></div></div>
<div class="t" style="left:2101.0px;top:1154.1px;font-size:21.22px;color:#444;font-weight:700;letter-spacing:-0.50px;">Dental</div>
<div class="b" style="left:2101.0px;top:1183.8px;width:292.7px;height:8px;border-radius:4px;overflow:hidden"><div style="position:absolute;left:0.0px;top:0;width:40.0px;height:8px;background:#2c5ff6"></div><div style="position:absolute;left:40.0px;top:0;width:20.4px;height:8px;background:#57ab3f"></div><div style="position:absolute;left:60.4px;top:0;width:90.6px;height:8px;background:#ed7d31"></div><div style="position:absolute;left:151.0px;top:0;width:20.8px;height:8px;background:#f5c443"></div><div style="position:absolute;left:171.8px;top:0;width:30.1px;height:8px;background:#df3a5c"></div><div style="position:absolute;left:201.9px;top:0;width:90.8px;height:8px;background:#111111"></div></div>
<svg class="b" style="left:2356.0px;top:1262.0px" width="20" height="22" viewBox="0 0 20 22"><path d="M12.5 5.5 L6.5 11 L12.5 16.5" stroke="#8f8f8f" stroke-width="1.9" fill="none" stroke-linecap="round" stroke-linejoin="round"/></svg>
<div class="t" style="left:2390.8px;top:1260.6px;font-size:21.37px;color:#2c5ff6;-webkit-text-stroke:0.64px #2c5ff6;">1</div>
<div class="t" style="left:2399.0px;top:1260.6px;font-size:21.37px;color:#444;">/3</div>
<svg class="b" style="left:2432.0px;top:1262.0px" width="20" height="22" viewBox="0 0 20 22"><path d="M7.5 5.5 L13.5 11 L7.5 16.5" stroke="#2c5ff6" stroke-width="1.9" fill="none" stroke-linecap="round" stroke-linejoin="round"/></svg>
<div class="b" style="left:568.0px;top:1351.0px;width:710.6px;height:260.0px;background:#fff;border-radius:16px;box-shadow:0 4px 12px rgba(0,0,0,0.05);"></div>
<svg class="b" style="left:599.7px;top:1375.0px" width="32" height="32" viewBox="0 0 32 32"><circle cx="16" cy="16" r="13.3" stroke="#8c8c8c" stroke-width="2" fill="none"/><path d="M17.8 11.4 L13.4 16 L17.8 20.6" stroke="#8c8c8c" stroke-width="2" fill="none" stroke-linecap="round" stroke-linejoin="round"/></svg>
<svg class="b" style="left:1213.8px;top:1375.0px" width="32" height="32" viewBox="0 0 32 32"><circle cx="16" cy="16" r="13.3" stroke="#2c5ff6" stroke-width="2" fill="none"/><path d="M14.2 11.4 L18.6 16 L14.2 20.6" stroke="#2c5ff6" stroke-width="2" fill="none" stroke-linecap="round" stroke-linejoin="round"/></svg>
<div class="t" style="left:783.8px;top:1380.8px;font-size:26.16px;color:#444;-webkit-text-stroke:0.78px #444;letter-spacing:-0.35px;">Expired &amp; Near to Expiry</div>
<div class="b" style="left:568.0px;top:1437.0px;width:710.6px;height:2.0px;background:#e0e0e0;"></div>
<div class="b" style="left:610.0px;top:1528.0px;width:234.0px;height:234.0px;background:#df3a5c;border-radius:50%;"></div>
<div class="b" style="left:896.0px;top:1549.0px;width:16.0px;height:16.0px;background:#df3a5c;border-radius:50%;"></div>
<div class="t" style="left:928.6px;top:1549.1px;font-size:21.80px;color:#666;">Expired</div>
<div class="b" style="left:1310.8px;top:1351.0px;width:710.6px;height:260.0px;background:#fff;border-radius:16px;box-shadow:0 4px 12px rgba(0,0,0,0.05);"></div>
<svg class="b" style="left:1342.5px;top:1375.0px" width="32" height="32" viewBox="0 0 32 32"><circle cx="16" cy="16" r="13.3" stroke="#8c8c8c" stroke-width="2" fill="none"/><path d="M17.8 11.4 L13.4 16 L17.8 20.6" stroke="#8c8c8c" stroke-width="2" fill="none" stroke-linecap="round" stroke-linejoin="round"/></svg>
<svg class="b" style="left:1956.6px;top:1375.0px" width="32" height="32" viewBox="0 0 32 32"><circle cx="16" cy="16" r="13.3" stroke="#2c5ff6" stroke-width="2" fill="none"/><path d="M14.2 11.4 L18.6 16 L14.2 20.6" stroke="#2c5ff6" stroke-width="2" fill="none" stroke-linecap="round" stroke-linejoin="round"/></svg>
<div class="t" style="left:1539.1px;top:1380.8px;font-size:26.16px;color:#444;-webkit-text-stroke:0.78px #444;letter-spacing:-0.18px;">Critical &amp; Out of Stock</div>
<div class="b" style="left:1310.8px;top:1437.0px;width:710.6px;height:2.0px;background:#e0e0e0;"></div>
<div class="b" style="left:1352.8px;top:1528.0px;width:234.0px;height:234.0px;background:#df3a5c;border-radius:50%;"></div>
<div class="b" style="left:1638.8px;top:1549.0px;width:16.0px;height:16.0px;background:#df3a5c;border-radius:50%;"></div>
<div class="t" style="left:1671.4px;top:1549.1px;font-size:21.80px;color:#666;">Critical</div>
<div class="b" style="left:2053.4px;top:1351.0px;width:710.6px;height:260.0px;background:#fff;border-radius:16px;box-shadow:0 4px 12px rgba(0,0,0,0.05);"></div>
<svg class="b" style="left:2085.1px;top:1375.0px" width="32" height="32" viewBox="0 0 32 32"><circle cx="16" cy="16" r="13.3" stroke="#8c8c8c" stroke-width="2" fill="none"/><path d="M17.8 11.4 L13.4 16 L17.8 20.6" stroke="#8c8c8c" stroke-width="2" fill="none" stroke-linecap="round" stroke-linejoin="round"/></svg>
<svg class="b" style="left:2699.2px;top:1375.0px" width="32" height="32" viewBox="0 0 32 32"><circle cx="16" cy="16" r="13.3" stroke="#2c5ff6" stroke-width="2" fill="none"/><path d="M14.2 11.4 L18.6 16 L14.2 20.6" stroke="#2c5ff6" stroke-width="2" fill="none" stroke-linecap="round" stroke-linejoin="round"/></svg>
<div class="t" style="left:2212.2px;top:1380.8px;font-size:26.16px;color:#444;-webkit-text-stroke:0.78px #444;letter-spacing:-0.10px;">Non-Moving &amp; Slow Moving Stock</div>
<div class="b" style="left:2053.4px;top:1437.0px;width:710.6px;height:2.0px;background:#e0e0e0;"></div>
<div class="b" style="left:2095.4px;top:1528.0px;width:234.0px;height:234.0px;background:#df3a5c;border-radius:50%;"></div>
<div class="b" style="left:2381.4px;top:1549.0px;width:16.0px;height:16.0px;background:#df3a5c;border-radius:50%;"></div>
<div class="t" style="left:2414.0px;top:1549.1px;font-size:21.80px;color:#666;">Non-Moving</div>
<div class="b" style="left:2778.0px;top:1411.7px;width:72.0px;height:72.0px;background:#2c5ff6;border-radius:50%;box-shadow:0 4px 28px rgba(0,0,0,0.20);"></div>
<svg class="b" style="left:2798.0px;top:1432.0px" width="32" height="32" viewBox="0 0 32 32"><path d="M3.7 19 V16.05 A12.3 12.3 0 0 1 28.3 16.05 V19" stroke="#fff" stroke-width="2.1" fill="none"/><ellipse cx="7.7" cy="23" rx="5.3" ry="6.25" fill="#fff"/><ellipse cx="24.3" cy="23" rx="5.3" ry="6.25" fill="#fff"/></svg>
</body></html>
